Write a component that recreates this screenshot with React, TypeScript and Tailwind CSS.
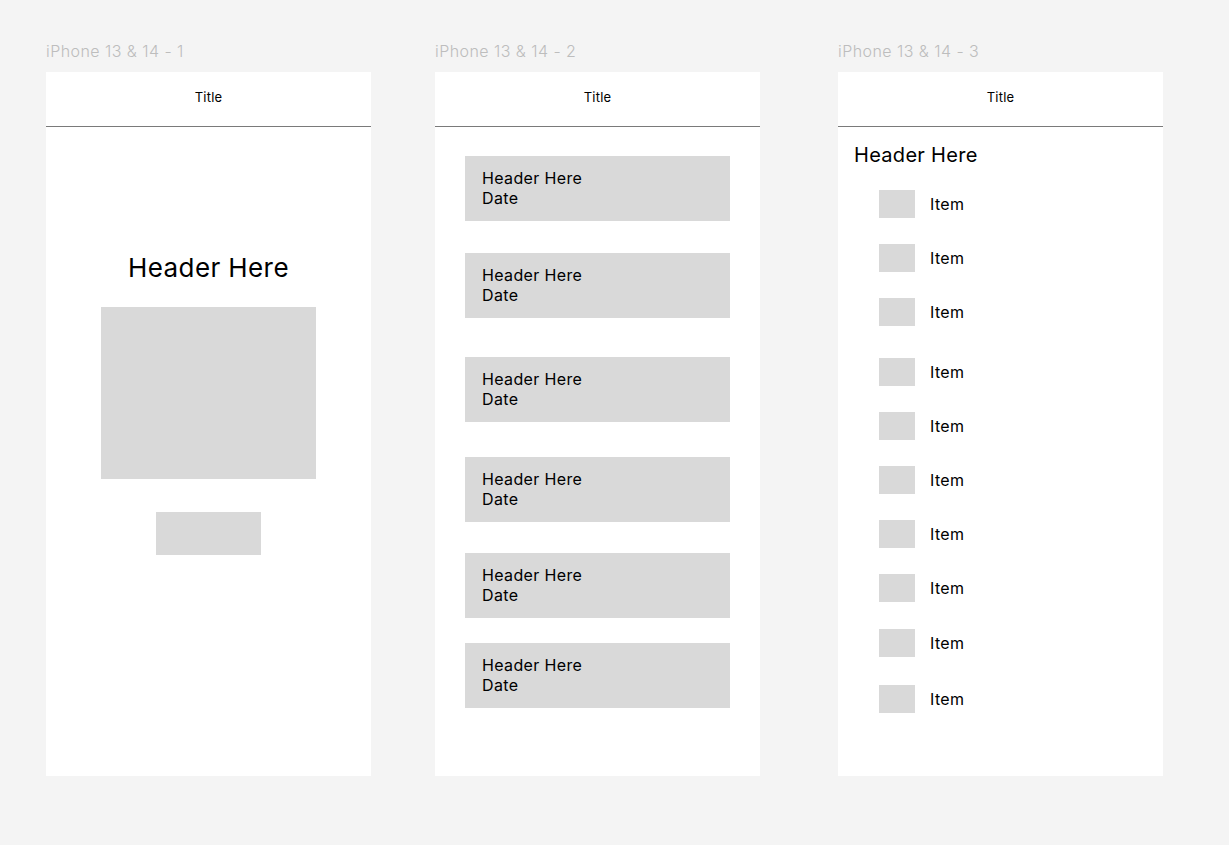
import type { ReactNode } from 'react';

const CARD_GAPS = [29, 32, 39, 35, 31, 25];
const ITEM_GAPS = [23, 26, 26, 32, 26, 26, 26, 26, 27, 28];

function Frame({ label, className, children }: { label: string; className?: string; children: ReactNode }) {
  return (
    <div className={className}>
      <div className="h-5 leading-5 text-[16px] font-light tracking-[0.45px] text-[#bdbdbd] mb-[11px] whitespace-nowrap">{label}</div>
      <div className="w-[325px] h-[704px] bg-white flex flex-col">
        <div className="h-[55px] shrink-0 border-b border-[#7a7a7a] flex items-center justify-center pb-[2px]">
          <span className="text-[13px] tracking-[0.2px] text-black">Title</span>
        </div>
        {children}
      </div>
    </div>
  );
}

export default function App() {
  return (
    <div
      className="min-h-screen w-full bg-[#f4f4f4] flex items-start pt-[41px] pl-[46px]"
      style={{ fontFamily: 'Inter, "Noto Sans", sans-serif' }}
    >
      {/* Frame 1 */}
      <Frame label="iPhone 13 & 14 - 1">
        <div className="flex flex-col items-center pt-[125px]">
          <h1 className="text-[26px] leading-8 tracking-[0.4px] text-black">Header Here</h1>
          <div className="mt-[23px] w-[215px] h-[172px] bg-[#d9d9d9]" />
          <div className="mt-[33px] w-[105px] h-[43px] bg-[#d9d9d9]" />
        </div>
      </Frame>

      {/* Frame 2 */}
      <Frame label="iPhone 13 & 14 - 2" className="ml-[64px]">
        <div className="flex flex-col pl-[30px]">
          {CARD_GAPS.map((gap, i) => (
            <div
              key={i}
              className="w-[265px] h-[65px] bg-[#d9d9d9] flex flex-col justify-center pl-[17px] pb-[2px] text-[16px] leading-5 tracking-[0.35px] text-black"
              style={{ marginTop: gap }}
            >
              <span>Header Here</span>
              <span>Date</span>
            </div>
          ))}
        </div>
      </Frame>

      {/* Frame 3 */}
      <Frame label="iPhone 13 & 14 - 3" className="ml-[78px]">
        <div className="flex flex-col pt-[16px] pl-[16px]">
          <h2 className="text-[20px] leading-6 tracking-[0.3px] text-black">Header Here</h2>
          {ITEM_GAPS.map((gap, i) => (
            <div key={i} className="flex items-center pl-[25px]" style={{ marginTop: gap }}>
              <div className="w-9 h-7 bg-[#d9d9d9]" />
              <span className="ml-[15px] text-[16px] tracking-[0.35px] text-black">Item</span>
            </div>
          ))}
        </div>
      </Frame>
    </div>
  );
}
